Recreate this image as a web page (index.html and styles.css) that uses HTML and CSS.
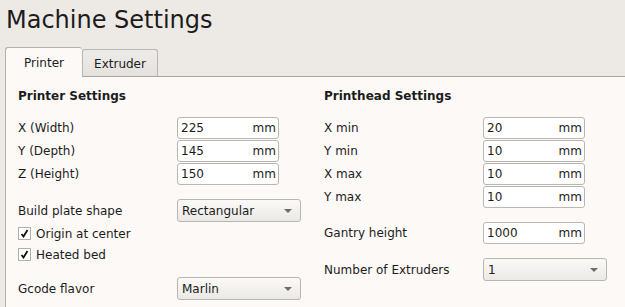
FILE: index.html
```html
<!DOCTYPE html>
<html lang="en">
<head>
  <meta charset="UTF-8">
  <title>Machine Settings</title>
  <link rel="stylesheet" href="styles.css">
</head>
<body>

  <h1 class="title">Machine Settings</h1>

  <div class="tabs">
    <div class="tab active">Printer</div>
    <div class="tab">Extruder</div>
  </div>

  <div class="panel">
    <!-- coluna esquerda -->
    <div class="col">
      <div class="heading">Printer Settings</div>

      <div class="row"><span class="label">X (Width)</span><div class="field"><span>225</span><span>mm</span></div></div>
      <div class="row"><span class="label">Y (Depth)</span><div class="field"><span>145</span><span>mm</span></div></div>
      <div class="row"><span class="label">Z (Height)</span><div class="field"><span>150</span><span>mm</span></div></div>

      <div class="row sel-row gap"><span class="label">Build plate shape</span><div class="select"><span>Rectangular</span><span class="arrow"></span></div></div>

      <div class="check-row"><span class="box"><svg width="9" height="9" viewBox="0 0 9 9"><path d="M1.5 5 L3.5 7.5 L7.5 1" fill="none" stroke="#111" stroke-width="1.8"/></svg></span>Origin at center</div>
      <div class="check-row"><span class="box"><svg width="9" height="9" viewBox="0 0 9 9"><path d="M1.5 5 L3.5 7.5 L7.5 1" fill="none" stroke="#111" stroke-width="1.8"/></svg></span>Heated bed</div>

      <div class="row sel-row gap-sm"><span class="label">Gcode flavor</span><div class="select"><span>Marlin</span><span class="arrow"></span></div></div>
    </div>

    <!-- coluna direita -->
    <div class="col">
      <div class="heading">Printhead Settings</div>

      <div class="row"><span class="label">X min</span><div class="field"><span>20</span><span>mm</span></div></div>
      <div class="row"><span class="label">Y min</span><div class="field"><span>10</span><span>mm</span></div></div>
      <div class="row"><span class="label">X max</span><div class="field"><span>10</span><span>mm</span></div></div>
      <div class="row"><span class="label">Y max</span><div class="field"><span>10</span><span>mm</span></div></div>

      <div class="row gap"><span class="label">Gantry height</span><div class="field"><span>1000</span><span>mm</span></div></div>

      <div class="row sel-row gap"><span class="label">Number of Extruders</span><div class="select"><span>1</span><span class="arrow"></span></div></div>
    </div>
  </div>

</body>
</html>
```

FILE: styles.css
```css
body {
  margin: 0;
  height: 307px;
  overflow: hidden;
  background: #edeae5;
  font-family: "DejaVu Sans", sans-serif;
  font-size: 12px;
  color: #1c1c1c;
  display: flex;
  flex-direction: column;
}
.title {
  margin: 6px 0 0 6px;
  font-size: 24px;
  font-weight: normal;
  line-height: 28px;
}
.tabs {
  display: flex;
  align-items: flex-end;
  margin-top: 13px;
  padding-left: 5px;
  margin-bottom: -1px;
  position: relative;
  z-index: 1;
}
.tab {
  box-sizing: border-box;
  height: 27px;
  width: 76px;
  margin-bottom: 1px;
  border: 1px solid #b9b5b0;
  border-bottom: none;
  border-radius: 3px 3px 0 0;
  background: linear-gradient(#eeece9, #e4e1de);
  display: flex;
  align-items: center;
  justify-content: center;
  padding-top: 2px;
}
.tab.active {
  height: 30px;
  width: 77px;
  margin-bottom: 0;
  background: #fcf9f7;
  padding-top: 1px;
  padding-bottom: 0;
  border-color: #b3afaa;
  border-right: none;
}
.panel {
  flex: 1;
  margin-left: 5px;
  border-top: 1px solid #a9a5a0;
  border-left: 1px solid #b3afaa;
  background: #fcf9f7;
  display: flex;
  padding-left: 12px;
}
.col {
  width: 306px;
  flex-shrink: 0;
  display: flex;
  flex-direction: column;
}
.heading {
  font-weight: bold;
  margin-top: 9px;
  line-height: 20px;
  margin-bottom: 11px;
}
.row {
  display: flex;
  align-items: center;
  height: 22px;
  margin-bottom: 1px;
}
.sel-row {
  height: 23px;
}
.gap {
  margin-top: 13px;
}
.gap-sm {
  margin-top: 12px;
}
.label {
  width: 159px;
}
.field {
  box-sizing: border-box;
  width: 102px;
  height: 22px;
  border: 1px solid #bab6b1;
  border-radius: 3px;
  background: #fff;
  display: flex;
  justify-content: space-between;
  align-items: center;
  padding: 0 2px 0 3px;
}
.select {
  box-sizing: border-box;
  width: 124px;
  height: 23px;
  border: 1px solid #b9b5b0;
  border-radius: 3px;
  background: linear-gradient(#fbfaf9, #ebe9e6);
  display: flex;
  justify-content: space-between;
  align-items: center;
  padding: 0 8px 0 4px;
}
.arrow {
  width: 0;
  height: 0;
  border-left: 4px solid transparent;
  border-right: 4px solid transparent;
  border-top: 4px solid #6f6d6a;
}
.check-row {
  display: flex;
  align-items: center;
  height: 21px;
}
.box {
  box-sizing: border-box;
  width: 13px;
  height: 13px;
  margin-right: 5px;
  border: 1px solid #b3afaa;
  background: #fff;
  display: flex;
  align-items: center;
  justify-content: center;
}
```
